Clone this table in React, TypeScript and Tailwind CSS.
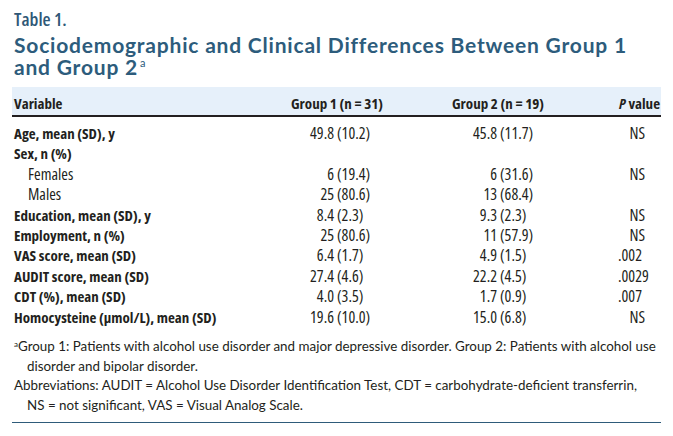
import React from "react";

type Row = {
  label: string;
  indent?: boolean;
  g1?: [string, string];
  g2?: [string, string];
  p?: string;
};

const rows: Row[] = [
  { label: "Age, mean (SD), y", g1: ["49.8", "(10.2)"], g2: ["45.8", "(11.7)"], p: "NS" },
  { label: "Sex, n (%)" },
  { label: "Females", indent: true, g1: ["6", "(19.4)"], g2: ["6", "(31.6)"], p: "NS" },
  { label: "Males", indent: true, g1: ["25", "(80.6)"], g2: ["13", "(68.4)"] },
  { label: "Education, mean (SD), y", g1: ["8.4", "(2.3)"], g2: ["9.3", "(2.3)"], p: "NS" },
  { label: "Employment, n (%)", g1: ["25", "(80.6)"], g2: ["11", "(57.9)"], p: "NS" },
  { label: "VAS score, mean (SD)", g1: ["6.4", "(1.7)"], g2: ["4.9", "(1.5)"], p: ".002" },
  { label: "AUDIT score, mean (SD)", g1: ["27.4", "(4.6)"], g2: ["22.2", "(4.5)"], p: ".0029" },
  { label: "CDT (%), mean (SD)", g1: ["4.0", "(3.5)"], g2: ["1.7", "(0.9)"], p: ".007" },
  { label: "Homocysteine (µmol/L), mean (SD)", g1: ["19.6", "(10.0)"], g2: ["15.0", "(6.8)"], p: "NS" },
];

function Val({ v, lw }: { v?: [string, string]; lw: string }) {
  if (!v) return <div />;
  return (
    <div className="flex">
      <span className={`${lw} text-right`}>{v[0]}</span>
      <span className="ml-[3px]">{v[1]}</span>
    </div>
  );
}

export default function App() {
  return (
    <div className="w-[673px] h-[436px] bg-white px-[12px] pt-[8px] text-[#231f20] overflow-hidden">
      <p className="font-['Open_Sans',sans-serif] [font-stretch:75%] font-semibold text-[18.5px] leading-[22px] pl-[2px] text-[#2f5877]">
        Table 1.
      </p>
      <h1 className="mt-[4px] pl-[2px] font-['Lato',sans-serif] font-bold text-[21px] leading-[22px] tracking-[0.8px] text-[#2d5c7c] whitespace-nowrap">
        Sociodemographic and Clinical Differences Between Group 1
        <br />
        and Group 2<span className="relative top-[-8px] text-[11px] font-normal leading-none ml-[2px] tracking-normal">a</span>
      </h1>

      <div className="mt-[9px] font-['Open_Sans',sans-serif] [font-stretch:75%] text-[16px]">
        <div className="grid grid-cols-[250px_160px_160px_79px] bg-[#e6f0fa] pt-[4px] border-b-[2px] border-[#231f20] leading-[24px] text-[15px] font-bold whitespace-nowrap">
          <div className="pl-[2px]">Variable</div>
          <div className="pl-[29px]">Group 1 (n = 31)</div>
          <div className="pl-[30px]">Group 2 (n = 19)</div>
          <div className="text-right pr-[1px]">
            <span className="italic">P</span> value
          </div>
        </div>

        <div className="pt-[6px] leading-[20.4px] whitespace-nowrap">
          {rows.map((r) => (
            <div key={r.label} className="grid grid-cols-[250px_160px_160px_79px] items-baseline">
              <div className={r.indent ? "pl-[16px]" : "pl-[2px] font-bold text-[15px]"}>{r.label}</div>
              <Val v={r.g1} lw="w-[72px]" />
              <Val v={r.g2} lw="w-[75px]" />
              <div>
                {r.p === "NS" ? (
                  <span className="block w-[63px] text-right">NS</span>
                ) : r.p ? (
                  <span className="block pl-[36px]">{r.p}</span>
                ) : null}
              </div>
            </div>
          ))}
        </div>
      </div>

      <div className="mt-[10px] font-['Lato',sans-serif] text-[13.4px] leading-[19.5px] whitespace-nowrap pl-[2px]">
        <p>
          <sup className="text-[8px] leading-none">a</sup>Group 1: Patients with alcohol use disorder and major depressive disorder. Group 2: Patients with alcohol use
        </p>
        <p className="pl-[13px]">disorder and bipolar disorder.</p>
        <p>Abbreviations: AUDIT = Alcohol Use Disorder Identification Test, CDT = carbohydrate-deficient transferrin,</p>
        <p className="pl-[13px]">NS = not significant, VAS = Visual Analog Scale.</p>
      </div>

      <div className="mt-[7px] border-t-[1.5px] border-[#2e5b7a]" />
    </div>
  );
}
